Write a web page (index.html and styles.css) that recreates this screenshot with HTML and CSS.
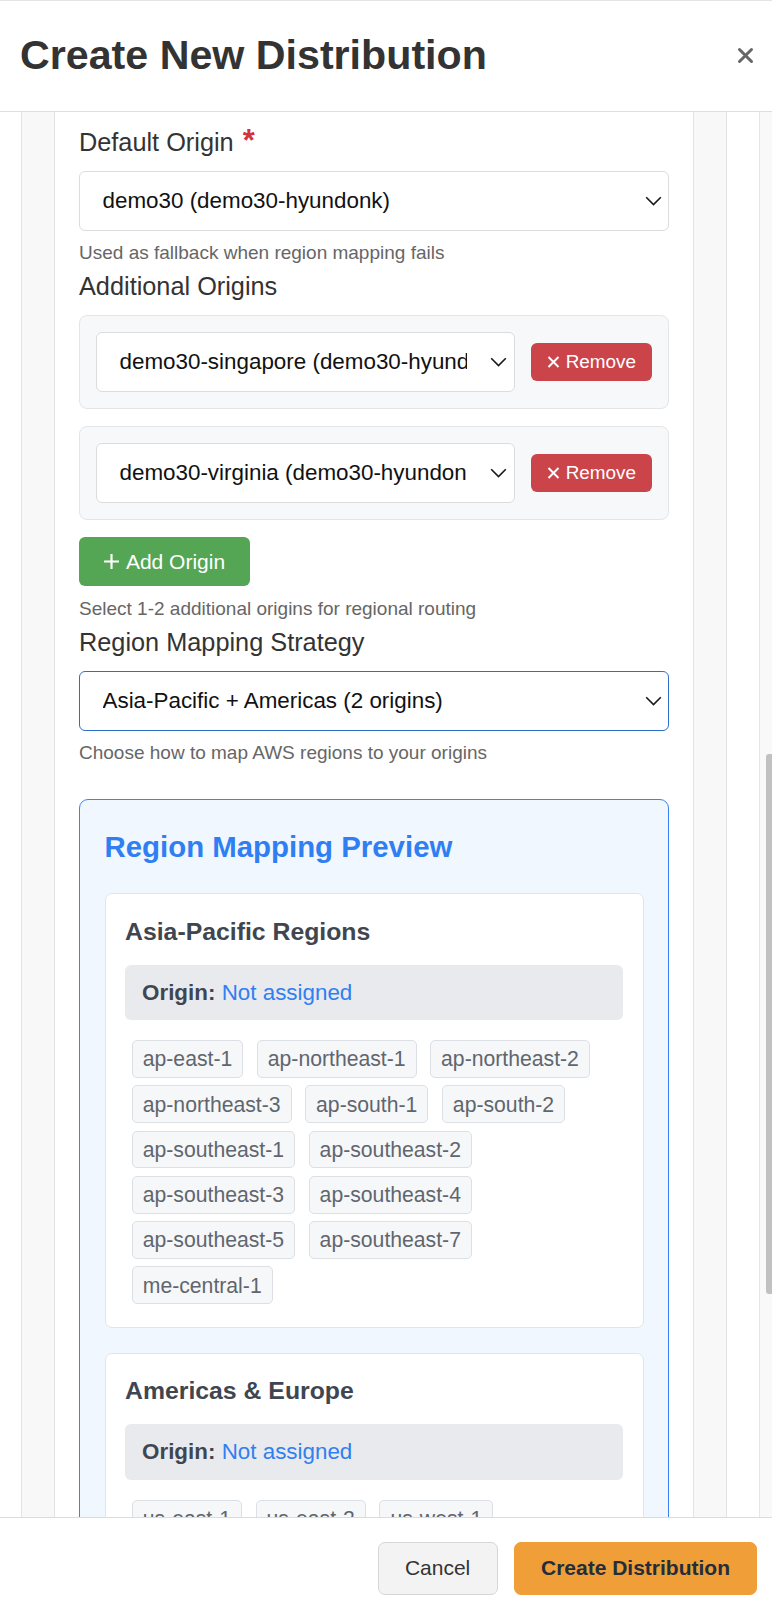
FILE: index.html
```html
<!DOCTYPE html>
<html lang="en">
<head>
<meta charset="utf-8">
<title>Create New Distribution</title>
<link rel="stylesheet" href="styles.css">
</head>
<body>
<div class="modal">
  <header class="modal-header">
    <h2 class="modal-title">Create New Distribution</h2>
    <button class="close-btn" type="button" aria-label="Close">
      <svg width="17" height="17" viewBox="0 0 17 17"><path d="M2.5 2.5 L14.5 14.5 M14.5 2.5 L2.5 14.5" stroke="#666" stroke-width="3" stroke-linecap="round" fill="none"/></svg>
    </button>
  </header>

  <div class="modal-body">
    <div class="panel">
      <div class="card">
        <div class="field">
          <label class="field-label">Default Origin <span class="req">*</span></label>
          <div class="select">
            <span class="select-value">demo30 (demo30-hyundonk)</span>
            <svg class="chev" width="17" height="10" viewBox="0 0 17 10"><path d="M1.2 1.2 L8.5 8.5 L15.8 1.2" stroke="#1a1a1a" stroke-width="1.6" fill="none"/></svg>
          </div>
          <p class="help">Used as fallback when region mapping fails</p>
        </div>

        <div class="field">
          <label class="field-label">Additional Origins</label>
          <div class="origin-row">
            <div class="select">
              <span class="select-value">demo30-singapore (demo30-hyundonk)</span>
              <svg class="chev" width="17" height="10" viewBox="0 0 17 10"><path d="M1.2 1.2 L8.5 8.5 L15.8 1.2" stroke="#1a1a1a" stroke-width="1.6" fill="none"/></svg>
            </div>
            <button class="btn-remove" type="button">
              <svg width="13" height="12" viewBox="0 0 13 12"><path d="M1.5 1 L11.5 11 M11.5 1 L1.5 11" stroke="#fff" stroke-width="2" fill="none"/></svg>
              <span>Remove</span>
            </button>
          </div>
          <div class="origin-row">
            <div class="select">
              <span class="select-value">demo30-virginia (demo30-hyundonk)</span>
              <svg class="chev" width="17" height="10" viewBox="0 0 17 10"><path d="M1.2 1.2 L8.5 8.5 L15.8 1.2" stroke="#1a1a1a" stroke-width="1.6" fill="none"/></svg>
            </div>
            <button class="btn-remove" type="button">
              <svg width="13" height="12" viewBox="0 0 13 12"><path d="M1.5 1 L11.5 11 M11.5 1 L1.5 11" stroke="#fff" stroke-width="2" fill="none"/></svg>
              <span>Remove</span>
            </button>
          </div>
          <button class="btn-add" type="button">
            <svg width="17" height="17" viewBox="0 0 17 17"><path d="M8.5 1 V16 M1 8.5 H16" stroke="#fff" stroke-width="2.2" fill="none"/></svg>
            <span>Add Origin</span>
          </button>
          <p class="help">Select 1-2 additional origins for regional routing</p>
        </div>

        <div class="field">
          <label class="field-label">Region Mapping Strategy</label>
          <div class="select select-focus">
            <span class="select-value">Asia-Pacific + Americas (2 origins)</span>
            <svg class="chev" width="17" height="10" viewBox="0 0 17 10"><path d="M1.2 1.2 L8.5 8.5 L15.8 1.2" stroke="#1a1a1a" stroke-width="1.6" fill="none"/></svg>
          </div>
          <p class="help">Choose how to map AWS regions to your origins</p>
        </div>

        <section class="preview">
          <h3 class="preview-title">Region Mapping Preview</h3>

          <div class="group">
            <h4 class="group-title">Asia-Pacific Regions</h4>
            <div class="origin-bar"><strong>Origin:</strong> <span class="unassigned">Not assigned</span></div>
            <div class="tags">
              <span class="tag">ap-east-1</span>
              <span class="tag">ap-northeast-1</span>
              <span class="tag">ap-northeast-2</span>
              <span class="tag">ap-northeast-3</span>
              <span class="tag">ap-south-1</span>
              <span class="tag">ap-south-2</span>
              <span class="tag">ap-southeast-1</span>
              <span class="tag">ap-southeast-2</span>
              <span class="tag">ap-southeast-3</span>
              <span class="tag">ap-southeast-4</span>
              <span class="tag">ap-southeast-5</span>
              <span class="tag">ap-southeast-7</span>
              <span class="tag">me-central-1</span>
            </div>
          </div>

          <div class="group">
            <h4 class="group-title">Americas &amp; Europe</h4>
            <div class="origin-bar"><strong>Origin:</strong> <span class="unassigned">Not assigned</span></div>
            <div class="tags">
              <span class="tag">us-east-1</span>
              <span class="tag">us-east-2</span>
              <span class="tag">us-west-1</span>
            </div>
          </div>
        </section>
      </div>
    </div>
    <div class="gutter"></div>
    <div class="scroll-track"><div class="scroll-thumb"></div></div>
  </div>

  <footer class="modal-footer">
    <button class="btn-cancel" type="button">Cancel</button>
    <button class="btn-primary" type="button">Create Distribution</button>
  </footer>
</div>
</body>
</html>
```

FILE: styles.css
```css
* {
  box-sizing: border-box;
}

html, body {
  margin: 0;
  padding: 0;
  background: #fff;
}

body {
  font-family: "Liberation Sans", Arial, Helvetica, sans-serif;
  color: #333;
}

.modal {
  width: 772px;
  height: 1600px;
  display: flex;
  flex-direction: column;
  overflow: hidden;
  background: #fff;
}

/* Header */
.modal-header {
  flex: none;
  height: 112px;
  display: flex;
  align-items: center;
  justify-content: space-between;
  padding: 0 10px 0 20px;
  border-top: 1px solid #e4e4e4;
  border-bottom: 1px solid #dedede;
}

.modal-title {
  margin: 0;
  font-size: 41.2px;
  line-height: 1.2;
  font-weight: 700;
  color: #333;
}

.close-btn {
  width: 34px;
  height: 34px;
  display: flex;
  align-items: center;
  justify-content: center;
  border: none;
  background: transparent;
  padding: 0;
  margin-top: -2px;
}

/* Body */
.modal-body {
  flex: 1;
  min-height: 0;
  display: flex;
  padding-left: 21px;
  overflow: hidden;
}

.panel {
  flex: none;
  display: flex;
  background: #f8f8f8;
  border-left: 1px solid #e3e3e3;
  border-right: 1px solid #e3e3e3;
  padding: 0 32px;
}

.card {
  width: 640px;
  background: #fff;
  border-left: 1px solid #e3e3e3;
  border-right: 1px solid #e3e3e3;
  padding: 14.5px 24px 0;
}

.gutter {
  flex: none;
  width: 32px;
  background: #fff;
}

.scroll-track {
  flex: none;
  width: 13px;
  background: #f9f9f9;
  border-left: 1px solid #e6e6e6;
  overflow: hidden;
}

.scroll-thumb {
  width: 6px;
  height: 540px;
  margin-top: 642px;
  margin-left: 6px;
  background: #c1c1c1;
  border-radius: 3px 0 0 3px;
}

/* Form fields */
.field + .field {
  margin-top: 5px;
}

.field-label {
  display: block;
  font-size: 25.3px;
  line-height: 30px;
  color: #333;
  margin-bottom: 14px;
}

.req {
  color: #d3343b;
  font-weight: 700;
  font-size: 31px;
  line-height: 0;
  margin-left: 2px;
}

.select {
  display: flex;
  align-items: center;
  height: 60px;
  border: 1px solid #dcdcdc;
  border-radius: 6px;
  padding: 0 6.5px 0 22.5px;
  background: #fff;
  font-size: 22.4px;
  color: #111;
}

.select-focus {
  border-color: #2f6dcb;
}

.select-value {
  flex: 1;
  min-width: 0;
  overflow: hidden;
  white-space: nowrap;
}

.chev {
  flex: none;
  margin-left: 23px;
}

.help {
  margin: 9.5px 0 0;
  font-size: 19px;
  line-height: 26px;
  color: #666;
}

/* Additional origins */
.origin-row {
  display: flex;
  align-items: center;
  gap: 16px;
  padding: 16px;
  background: #f7f8fa;
  border: 1px solid #e3e5e8;
  border-radius: 8px;
  margin-bottom: 17px;
}

.origin-row .select {
  flex: 1;
  min-width: 0;
}

.btn-remove {
  flex: none;
  display: inline-flex;
  align-items: center;
  gap: 6px;
  height: 37.7px;
  padding: 0 16px;
  border: none;
  border-radius: 6px;
  background: #cb444a;
  color: #fff;
  font-family: inherit;
  font-size: 18.9px;
}

.btn-add {
  display: inline-flex;
  align-items: center;
  gap: 5.5px;
  height: 49.4px;
  padding: 0 24.4px;
  border: none;
  border-radius: 6px;
  background: #54a654;
  color: #fff;
  font-family: inherit;
  font-size: 21px;
}

/* Preview */
.preview {
  margin-top: 33px;
  border: 1px solid #3b82f6;
  border-radius: 9px;
  background: #f0f7ff;
  padding: 24.5px;
}

.preview-title {
  margin: 0 0 24.5px;
  font-size: 29.4px;
  line-height: 44px;
  font-weight: 700;
  color: #2f7ff2;
}

.group {
  background: #fff;
  border: 1px solid #e1e4e8;
  border-radius: 7px;
  padding: 19.5px;
}

.group + .group {
  margin-top: 24.5px;
}

.group-title {
  margin: 0 0 14px;
  font-size: 24.8px;
  line-height: 36.75px;
  font-weight: 700;
  color: #3f4650;
}

.origin-bar {
  background: #e9eaee;
  border-radius: 6px;
  padding: 11px 17px;
  font-size: 22.4px;
  line-height: 33.6px;
  color: #3f4650;
}

.unassigned {
  color: #3080f0;
}

.tags {
  display: flex;
  flex-wrap: wrap;
  margin-top: 16.25px;
}

.tag {
  margin: 3.75px 6.75px;
  padding: 5.25px 10px;
  border: 1px solid #dcdfe3;
  border-radius: 5px;
  background: #f6f7f9;
  font-size: 21.2px;
  line-height: 25.2px;
  color: #5f666e;
  white-space: nowrap;
}

/* Footer */
.modal-footer {
  flex: none;
  height: 83px;
  display: flex;
  justify-content: flex-end;
  align-items: flex-start;
  gap: 16.3px;
  padding: 24.3px 15px 0;
  border-top: 1px solid #dcdcdc;
  background: #fff;
}

.btn-cancel,
.btn-primary {
  height: 52.4px;
  border-radius: 7px;
  font-family: inherit;
  font-size: 21px;
  display: inline-flex;
  align-items: center;
}

.btn-cancel {
  padding: 0 26.4px;
  background: #f3f3f3;
  border: 1px solid #d6d6d6;
  color: #333;
}

.btn-primary {
  padding: 0 26px;
  background: #f09e38;
  border: 1px solid #f09e38;
  color: #232d3b;
  font-weight: 700;
}
```
